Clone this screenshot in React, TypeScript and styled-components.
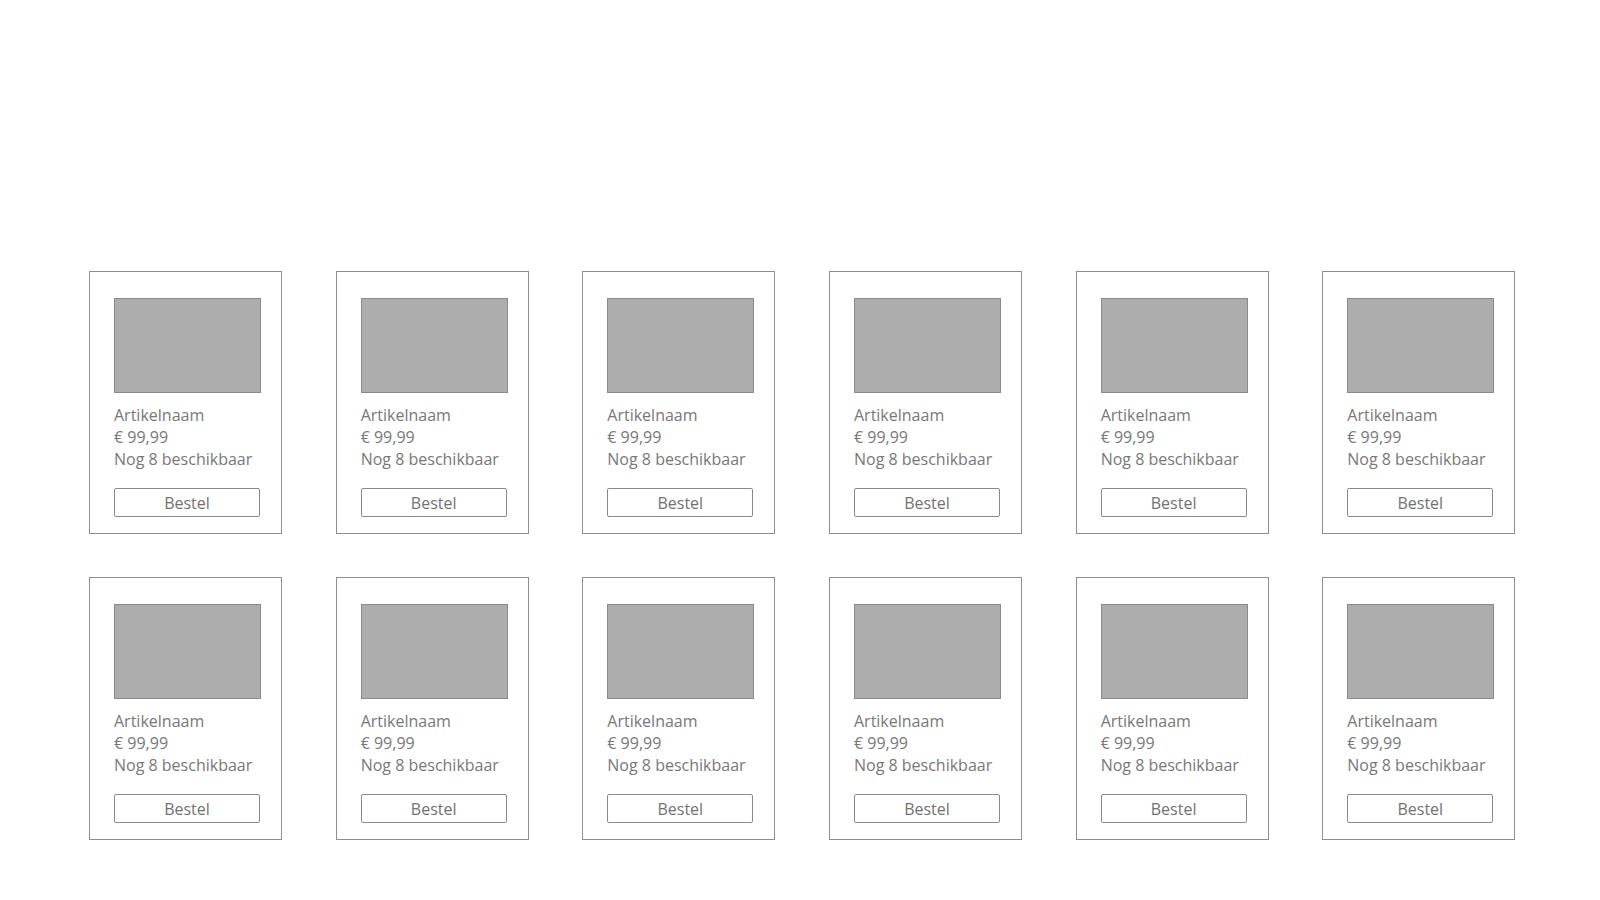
import React from "react";
import styled, { createGlobalStyle } from "styled-components";

const GlobalStyle = createGlobalStyle`
  html, body {
    margin: 0;
    padding: 0;
    background: #ffffff;
  }
  body {
    font-family: "Open Sans", "Noto Sans", sans-serif;
  }
`;

const Page = styled.main`
  width: 1600px;
  height: 900px;
  box-sizing: border-box;
  padding: 271px 0 0 89px;
  background: #ffffff;
`;

const Grid = styled.div`
  display: grid;
  grid-template-columns: repeat(6, 193px);
  column-gap: 53.67px;
  row-gap: 43px;
`;

const Card = styled.article`
  box-sizing: border-box;
  width: 193px;
  height: 263px;
  border: 1px solid #8e8e8e;
  padding: 26px 0 16px 24px;
  display: flex;
  flex-direction: column;
  align-items: flex-start;
`;

const Thumb = styled.div`
  box-sizing: border-box;
  width: 147px;
  height: 95px;
  background: #adadad;
  border: 1px solid #8a8a8a;
`;

const Info = styled.div`
  margin-top: 11px;
  display: flex;
  flex-direction: column;
  font-size: 16px;
  line-height: 22px;
  color: #787878;
`;

const Line = styled.span`
  white-space: nowrap;
`;

const OrderButton = styled.button`
  box-sizing: border-box;
  margin-top: 18px;
  width: 146px;
  height: 29px;
  padding: 2px 0 0;
  background: #ffffff;
  border: 1px solid #8a8a8a;
  border-radius: 2px;
  font-family: "Open Sans", "Noto Sans", sans-serif;
  font-size: 16px;
  line-height: 25px;
  color: #727272;
  text-align: center;
`;

const products = Array.from({ length: 12 }, (_, i) => ({
  id: i,
  name: "Artikelnaam",
  price: "€ 99,99",
  stock: "Nog 8 beschikbaar",
}));

export default function App() {
  return (
    <>
      <GlobalStyle />
      <Page>
        <Grid>
          {products.map((p) => (
            <Card key={p.id}>
              <Thumb />
              <Info>
                <Line>{p.name}</Line>
                <Line>{p.price}</Line>
                <Line>{p.stock}</Line>
              </Info>
              <OrderButton>Bestel</OrderButton>
            </Card>
          ))}
        </Grid>
      </Page>
    </>
  );
}
